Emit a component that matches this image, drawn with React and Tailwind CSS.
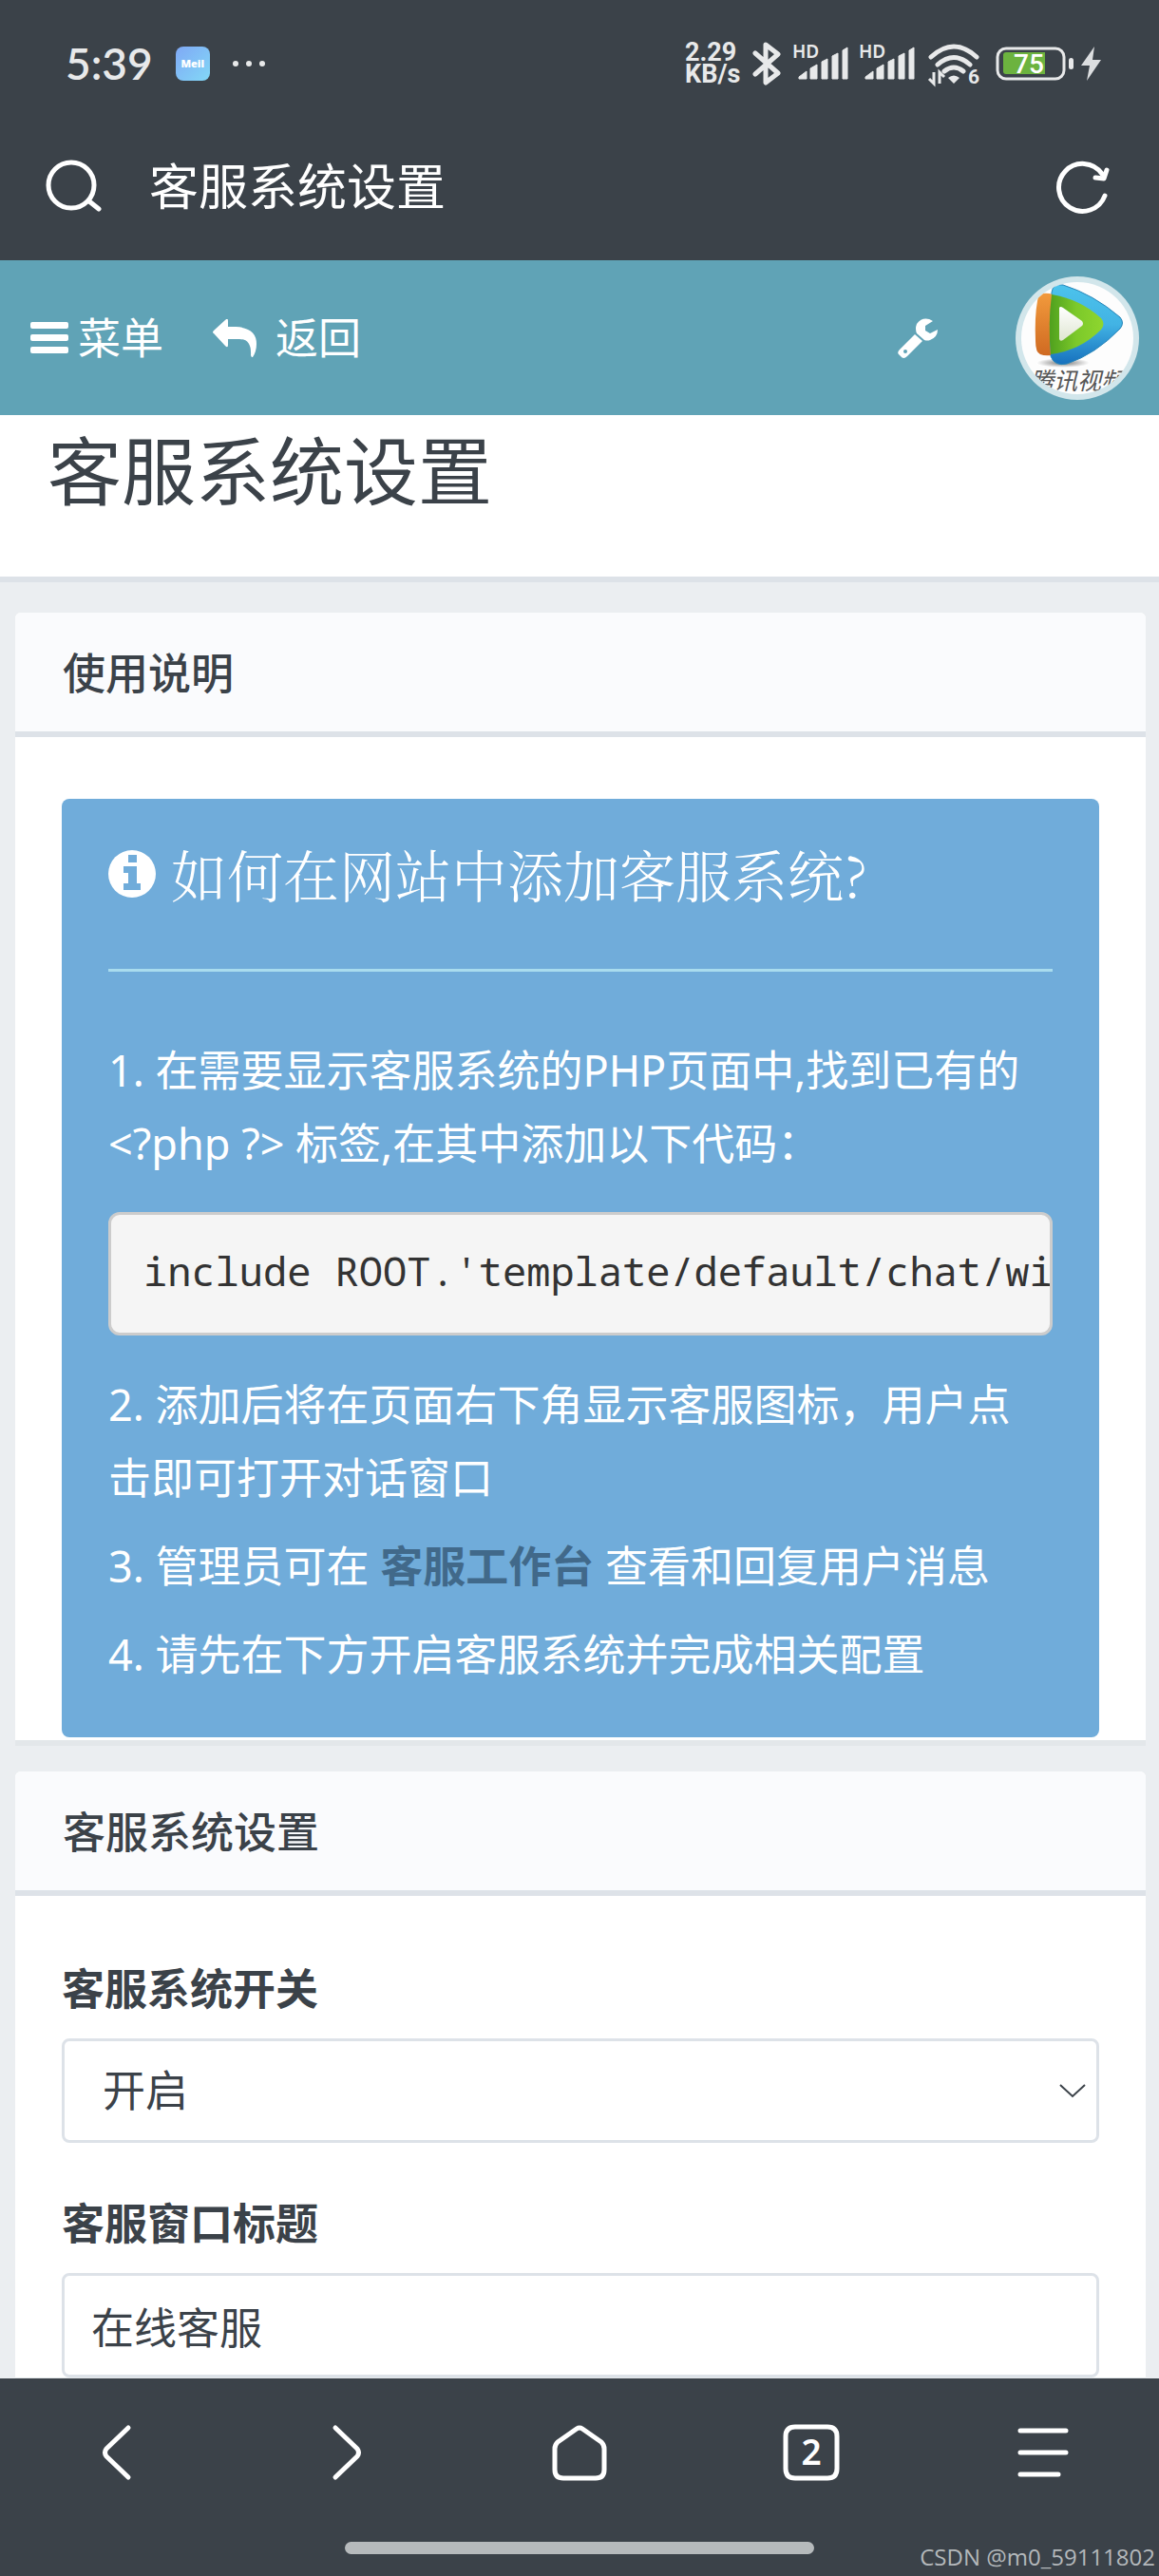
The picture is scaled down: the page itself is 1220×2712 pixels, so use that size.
import React from "react";

const signalBars = [
  "M0 33V31L8 25V33Z",
  "M12 33V22L19 18V33Z",
  "M24 33V15L30 12V33Z",
  "M35 33V9L41 6V33Z",
  "M46 33V3L51 0V33Z",
];

function Signal() {
  return (
    <svg viewBox="0 0 60 50" className="h-[50px] w-[60px] shrink-0 overflow-visible" fill="#e8e9ea">
      <text x="0" y="19" fontSize="19" fontWeight="600" fontFamily="Noto Sans, sans-serif">HD</text>
      <g transform="translate(7 8)" strokeLinejoin="round" stroke="#e8e9ea" strokeWidth="1">
        {signalBars.map((d) => (
          <path key={d} d={d} />
        ))}
      </g>
    </svg>
  );
}

function StatusBar() {
  return (
    <div className="flex h-[134px] items-center justify-between pl-[69px] pr-[60px]">
      <div className="flex items-center">
        <span className="font-['Lato','Noto_Sans',sans-serif] text-[46px] leading-none font-semibold text-[#e8e9ea]">5:39</span>
        <div className="ml-6 flex size-9 items-center justify-center rounded-lg bg-linear-to-br from-[#7fa8f5] to-[#82d8f6] text-[11px] font-black text-white">
          Meil
        </div>
        <svg viewBox="0 0 34 8" className="ml-6 h-2 w-[34px]" fill="#e8e9ea">
          <circle cx="3" cy="4" r="3" />
          <circle cx="17" cy="4" r="3" />
          <circle cx="31" cy="4" r="3" />
        </svg>
      </div>
      <div className="flex items-center text-[#e8e9ea]">
        <div className="w-[59px] font-['Roboto','Noto_Sans',sans-serif] text-[27px] leading-[23px] font-bold">
          <div>2.29</div>
          <div>KB/s</div>
        </div>
        <svg viewBox="0 0 30 46" className="ml-3 mr-3 h-[46px] w-[30px]" fill="none" stroke="#e8e9ea" strokeWidth="5" strokeLinejoin="round" strokeLinecap="round">
          <path d="M3 12L27 33L14 43V3L27 13L3 34" />
        </svg>
        <Signal />
        <span className="w-[10px]" />
        <Signal />
        <svg viewBox="0 0 56 50" className="ml-[13px] h-[50px] w-14 overflow-visible" fill="none" stroke="#e8e9ea" strokeWidth="5" strokeLinecap="round">
          <path d="M3 18Q27 -4 51 18M10 26Q27 11 44 26M17 33Q27 25 37 33" />
          <path d="M21 40Q27 35 33 40L27 46Z" fill="#e8e9ea" stroke="none" />
          <path d="M6 34V46L1 41M12 46V34L17 39" strokeWidth="3" strokeLinecap="butt" />
          <text x="42" y="46" fill="#e8e9ea" stroke="none" fontSize="21" fontWeight="700" fontFamily="Roboto, sans-serif">6</text>
        </svg>
        <svg viewBox="0 0 112 38" className="ml-[15px] h-[38px] w-28">
          <rect x="2" y="3" width="70" height="32" rx="9" fill="none" stroke="#e8e9ea" strokeWidth="3" />
          <path d="M11 7H52V30H11Q8 30 8 27V10Q8 7 11 7Z" fill="#6cb33f" />
          <rect x="77" y="13" width="5" height="12" rx="2.5" fill="#e8e9ea" />
          <text x="19" y="29" fill="#fff" fontSize="28" fontWeight="500" fontFamily="Roboto, sans-serif">75</text>
          <path d="M104 1L90 21H99L96 37L111 15H102Z" fill="#dcdee0" />
        </svg>
      </div>
    </div>
  );
}

function AddressBar() {
  return (
    <div className="flex h-[140px] items-center pb-[16px] pl-[47px] pr-[50px]">
      <button type="button" aria-label="搜索">
        <svg viewBox="0 0 60 60" className="size-[60px]" fill="none" stroke="#fff" strokeWidth="5" strokeLinecap="round">
          <circle cx="28" cy="29" r="24" />
          <path d="M47 46L57 54" />
        </svg>
      </button>
      <span className="ml-[50px] flex-1 text-[52px] leading-[60px] text-white">客服系统设置</span>
      <button type="button" aria-label="刷新">
        <svg viewBox="0 0 60 60" className="size-[60px]" fill="none" stroke="#fff" strokeWidth="5" strokeLinecap="round" strokeLinejoin="round">
          <path d="M53 40A25 25 0 1 1 50 17" />
          <path d="M43 21L52 22L55 13" />
        </svg>
      </button>
    </div>
  );
}

function Avatar() {
  return (
    <svg viewBox="0 0 130 130" className="size-[130px]">
      <defs>
        <clipPath id="face"><circle cx="65" cy="65" r="59" /></clipPath>
        <linearGradient id="blue" x1="0" y1="0" x2="0" y2="1">
          <stop offset="0" stopColor="#4cc3ec" />
          <stop offset="0.5" stopColor="#42b3e4" />
          <stop offset="1" stopColor="#1670bd" />
        </linearGradient>
        <linearGradient id="green" x1="0" y1="0" x2="1" y2="0">
          <stop offset="0" stopColor="#4fa01e" />
          <stop offset="0.5" stopColor="#7cc92a" />
          <stop offset="1" stopColor="#8fd62f" />
        </linearGradient>
        <linearGradient id="orange" x1="0" y1="0" x2="0" y2="1">
          <stop offset="0" stopColor="#f29a3c" />
          <stop offset="1" stopColor="#cf6a22" />
        </linearGradient>
        <linearGradient id="play" x1="0" y1="0" x2="0" y2="1">
          <stop offset="0" stopColor="#fff" />
          <stop offset="1" stopColor="#dfe6d2" />
        </linearGradient>
        <radialGradient id="shade">
          <stop offset="0" stopColor="#777" />
          <stop offset="1" stopColor="#fff" />
        </radialGradient>
      </defs>
      <circle cx="65" cy="65" r="65" fill="#d2e6eb" />
      <circle cx="65" cy="65" r="59" fill="#fdfdfd" />
      <g clipPath="url(#face)">
        <ellipse cx="50" cy="91" rx="28" ry="5" fill="url(#shade)" />
        <path d="M38 17Q39 7 50 9Q82 19 110 43Q115 49 110 55Q84 82 54 92Q41 95 37 84Q35 50 38 17Z" fill="url(#blue)" stroke="#2a86b8" strokeWidth="1" />
        <path d="M28 18Q34 17 39 19Q34 50 37 83Q31 84 26 82Q21 80 21 68Q20 42 23 26Q24 19 28 18Z" fill="url(#orange)" />
        <path d="M38 19Q68 24 90 44Q95 50 90 56Q68 78 37 82Q34 50 38 19Z" fill="url(#green)" />
        <path d="M46 33Q47 31 50 33L70 47Q72 50 70 52L50 67Q47 69 46 66Z" fill="url(#play)" />
        <text x="65" y="119" textAnchor="middle" fontSize="25" fontStyle="italic" fill="#555" fontFamily="Noto Sans CJK SC, sans-serif">腾讯视频</text>
      </g>
    </svg>
  );
}

function SiteHeader() {
  return (
    <header className="flex h-[163px] items-center bg-[#60a3b6] pl-8 pr-[21px] text-[45px] leading-[60px] text-white">
      <button type="button" className="flex items-center gap-[10px]">
        <svg viewBox="0 0 40 34" className="h-[34px] w-10" fill="#fff">
          <rect width="40" height="7" rx="2" />
          <rect y="13" width="40" height="7" rx="2" />
          <rect y="26" width="40" height="7" rx="2" />
        </svg>
        菜单
      </button>
      <a href="#back" className="ml-[52px] flex items-center gap-[20px]">
        <svg viewBox="0 0 46 40" className="h-10 w-[46px]" fill="#fff">
          <path d="M1 15Q-1 14 1 12L13 1Q16 -2 16 2V8H24Q46 9 46 26Q46 34 42 40Q41 41 40 38Q41 21 28 21H16V27Q16 31 13 28Z" />
        </svg>
        返回
      </a>
      <button type="button" aria-label="工具" className="ml-auto">
        <svg viewBox="0 0 42 42" className="size-[42px]" fill="#fff">
          <path fillRule="evenodd" d="M18 17L26 24L10 40Q6 44 3 40L1 38Q-1 36 2 33ZM8 33A2 2 0 1 0 8 37A2 2 0 1 0 8 33Z" />
          <path d="M37 3L29 8V13L34 16L42 12Q42 20 34 23Q31 24 28 23L20 16Q18 11 20 6Q27 -3 37 3Z" />
        </svg>
      </button>
      <button type="button" aria-label="账户" className="ml-[82px]">
        <Avatar />
      </button>
    </header>
  );
}

function Card({ title, children }) {
  return (
    <section className="rounded-t-md bg-white text-[#3b4249] shadow-[0_6px_0_#e3e7ea]">
      <h2 className="rounded-t-md border-b-6 border-[#dde2e8] bg-[#fafbfd] px-[50px] pt-[34px] pb-[31px] text-[45px] leading-[60px] font-medium">{title}</h2>
      {children}
    </section>
  );
}

function Instructions() {
  return (
    <div className="px-[49px] pt-[65px] pb-[3px]">
      <div className="rounded-lg bg-[#70acda] px-[49px] pt-[46px] pb-[49px] text-[45px] leading-[77px] text-white">
        <h3 className="flex items-center gap-4 border-b-3 border-[#a9dcee] pb-[68px] text-[59px] leading-[65px] font-light">
          <svg viewBox="0 0 50 50" className="size-[50px]">
            <circle cx="25" cy="25" r="25" fill="#fff" />
            <path d="M21 5H30V13H21ZM16 17H30V35H34V42H16V35H21V24H16Z" fill="#70acda" />
          </svg>
          <span className="font-['Noto_Serif_CJK_SC','Noto_Sans_CJK_SC',serif]">如何在网站中添加客服系统?</span>
        </h3>
        <p className="mt-[65px]">
          1. 在需要显示客服系统的PHP页面中,找到已有的 &lt;?php ?&gt; 标签,在其中添加以下代码：
        </p>
        <pre className="mt-[34px] overflow-hidden rounded-xl border-3 border-[#cccccc] bg-[#f5f5f5] px-[34px] pt-7 pb-[34px] font-['Noto_Sans_Mono','DejaVu_Sans_Mono',monospace] text-[42px] leading-[62px] text-[#333]">
          include ROOT.'template/default/chat/widget.php';
        </pre>
        <p className="mt-[34px]">2. 添加后将在页面右下角显示客服图标，用户点击即可打开对话窗口</p>
        <p className="mt-4">
          3. 管理员可在 <a href="#desk" className="font-bold text-[#41698a]">客服工作台</a> 查看和回复用户消息
        </p>
        <p className="mt-4">4. 请先在下方开启客服系统并完成相关配置</p>
      </div>
    </div>
  );
}

function SettingsForm() {
  return (
    <form className="px-[49px] pt-[65px] text-[45px]">
      <label htmlFor="enabled" className="block pb-[20px] leading-[65px] font-bold">客服系统开关</label>
      <div className="relative">
        <select id="enabled" className="block h-[110px] w-full appearance-none rounded-lg border-3 border-[#dde2e8] bg-white px-10">
          <option>开启</option>
          <option>关闭</option>
        </select>
        <svg viewBox="0 0 28 15" className="pointer-events-none absolute top-12 right-[14px] h-[15px] w-7" fill="none" stroke="#3b4249" strokeWidth="2">
          <path d="M1 1L14 13L27 1" />
        </svg>
      </div>
      <label htmlFor="title" className="block pt-[52px] pb-[20px] leading-[65px] font-bold">客服窗口标题</label>
      <input id="title" type="text" defaultValue="在线客服" className="block h-[110px] w-full rounded-lg border-3 border-[#dde2e8] bg-white px-7" />
    </form>
  );
}

const navItems = [
  { label: "后退", path: "M43 4L20 26Q17 30 20 34L43 56" },
  { label: "前进", path: "M17 4L40 26Q43 30 40 34L17 56" },
  { label: "主页", path: "M27 5Q30 3 33 5L53 19Q56 22 56 26V48Q56 57 47 57H13Q4 57 4 48V26Q4 22 7 19Z" },
  { label: "标签页", path: "M13 3H47Q57 3 57 13V47Q57 57 47 57H13Q3 57 3 47V13Q3 3 13 3Z", count: "2" },
  { label: "菜单", path: "M6 7H54M6 30H54M6 53H46" },
];

function BrowserNav() {
  return (
    <footer className="relative bg-[#3b4249] pt-12 pb-[23px]">
      <nav className="grid grid-cols-5 justify-items-center">
        {navItems.map((item) => (
          <button key={item.label} type="button" aria-label={item.label}>
            <svg viewBox="0 0 60 60" className="size-[60px]" fill="none" stroke="#fff" strokeWidth="5" strokeLinecap="round" strokeLinejoin="round">
              <path d={item.path} />
              {item.count && (
                <text x="30" y="43" textAnchor="middle" fill="#fff" stroke="none" fontSize="37" fontWeight="600" fontFamily="Noto Sans, sans-serif">{item.count}</text>
              )}
            </svg>
          </button>
        ))}
      </nav>
      <div className="mx-auto mt-16 h-[13px] w-[494px] rounded-full bg-[#b6babc]" />
      <span className="absolute right-1 bottom-1 font-['Open_Sans',sans-serif] text-[24px] leading-[32px] text-[#b4b8bb]">CSDN @m0_59111802</span>
    </footer>
  );
}

export default function App() {
  return (
    <div className="flex h-screen flex-col overflow-hidden bg-[#ebeef1] font-['Noto_Sans','Noto_Sans_CJK_SC',sans-serif]">
      <div className="shrink-0 bg-[#3b4249]">
        <StatusBar />
        <AddressBar />
      </div>
      <div className="min-h-0 flex-1 overflow-hidden">
        <SiteHeader />
        <div className="border-b-6 border-[#dde2e8] bg-white px-[50px] pt-3 pb-16">
          <h1 className="text-[78px] leading-[94px] text-[#3b4249]">客服系统设置</h1>
        </div>
        <main className="flex flex-col gap-[33px] pt-8 pr-[14px] pl-4">
          <Card title="使用说明"><Instructions /></Card>
          <Card title="客服系统设置"><SettingsForm /></Card>
        </main>
      </div>
      <BrowserNav />
    </div>
  );
}
